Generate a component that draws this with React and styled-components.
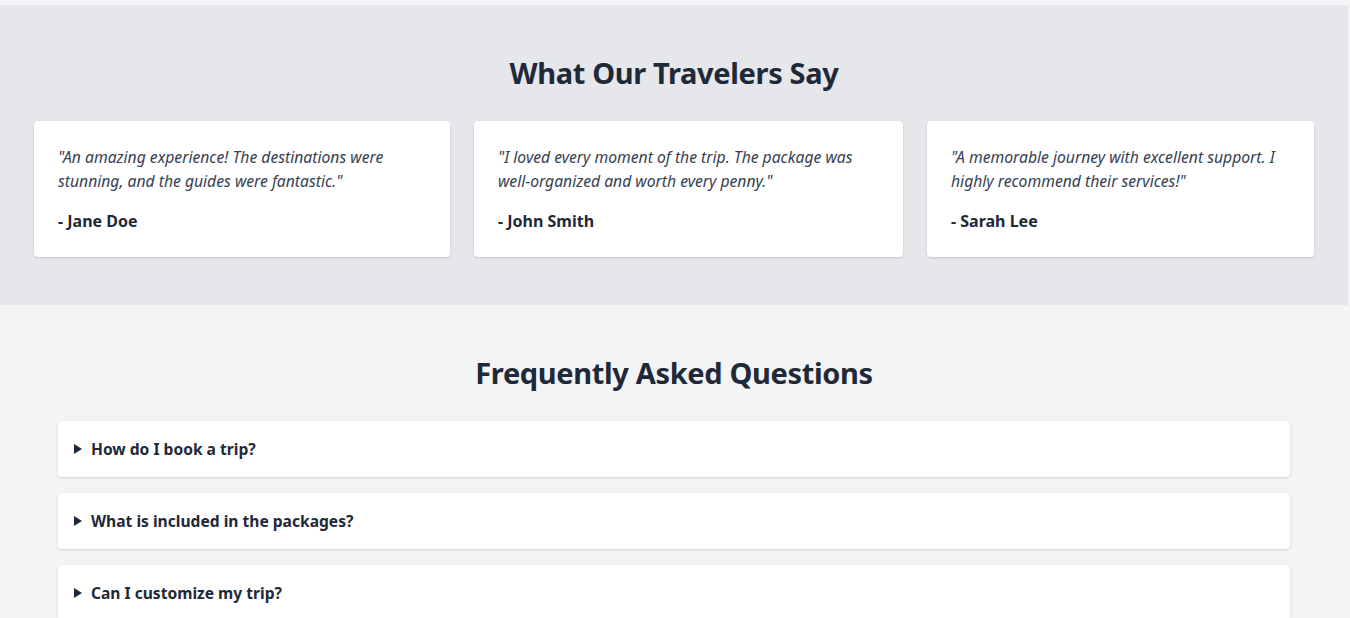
import React from "react";
import styled, { createGlobalStyle } from "styled-components";

const Global = createGlobalStyle`
  html, body { margin: 0; padding: 0; background: #f3f4f6; }
  body { font-family: "Noto Sans", "Open Sans", sans-serif; color: #1f2937; }
  * { box-sizing: border-box; }
`;

const Page = styled.div`
  width: 1348px;
`;

const TopStrip = styled.div`
  height: 5px;
  background: #f3f4f6;
`;

const Section = styled.section`
  background: ${(p) => p.$bg};
  padding: 48px 0;
`;

const Container = styled.div`
  max-width: 1280px;
  margin: 0 auto;
  padding: 0 ${(p) => p.$pad || 0}px;
`;

const Title = styled.h2`
  margin: 0 0 32px;
  padding-top: 2px;
  height: 36px;
  text-align: center;
  font-size: 29px;
  line-height: 36px;
  font-weight: 700;
  color: #1f2937;
  letter-spacing: -0.35px;
`;

const CardRow = styled.div`
  display: grid;
  grid-template-columns: 416fr 429fr 387fr;
  gap: 24px;
`;

const Card = styled.div`
  background: #fff;
  border-radius: 4px;
  padding: 24px;
  box-shadow: 0 1px 3px rgba(0, 0, 0, 0.1), 0 1px 2px rgba(0, 0, 0, 0.06);
`;

const Quote = styled.p`
  margin: 0 0 16px;
  font-style: italic;
  font-size: 15.7px;
  line-height: 24px;
  color: #374151;
`;

const Author = styled.p`
  margin: 0;
  font-weight: 700;
  font-size: 16px;
  line-height: 24px;
  color: #1f2937;
`;

const FaqList = styled.div`
  display: flex;
  flex-direction: column;
  gap: 16px;
`;

const FaqItem = styled.details`
  background: #fff;
  border-radius: 4px;
  padding: 16px;
  box-shadow: 0 1px 3px rgba(0, 0, 0, 0.1), 0 1px 2px rgba(0, 0, 0, 0.06);
`;

const Summary = styled.summary`
  font-weight: 700;
  font-size: 15.6px;
  line-height: 24px;
  color: #1f2937;
  cursor: pointer;
  list-style: none;
  display: flex;
  align-items: center;
  &::-webkit-details-marker { display: none; }
  &::before {
    content: "";
    display: inline-block;
    width: 0;
    height: 0;
    border-top: 5px solid transparent;
    border-bottom: 5px solid transparent;
    border-left: 8px solid #1f2937;
    margin-right: 9px;
  }
`;

const testimonials = [
  { q: "\"An amazing experience! The destinations were stunning, and the guides were fantastic.\"", a: "- Jane Doe" },
  { q: "\"I loved every moment of the trip. The package was well-organized and worth every penny.\"", a: "- John Smith" },
  { q: "\"A memorable journey with excellent support. I highly recommend their services!\"", a: "- Sarah Lee" },
];

const faqs = [
  "How do I book a trip?",
  "What is included in the packages?",
  "Can I customize my trip?",
];

export default function App() {
  return (
    <Page>
      <Global />
      <TopStrip />
      <Section $bg="#e5e7eb">
        <Container>
          <Title>What Our Travelers Say</Title>
          <CardRow>
            {testimonials.map((t) => (
              <Card key={t.a}>
                <Quote>{t.q}</Quote>
                <Author>{t.a}</Author>
              </Card>
            ))}
          </CardRow>
        </Container>
      </Section>
      <Section $bg="#f3f4f6">
        <Container $pad={24}>
          <Title>Frequently Asked Questions</Title>
          <FaqList>
            {faqs.map((f) => (
              <FaqItem key={f}>
                <Summary>{f}</Summary>
              </FaqItem>
            ))}
          </FaqList>
        </Container>
      </Section>
    </Page>
  );
}
